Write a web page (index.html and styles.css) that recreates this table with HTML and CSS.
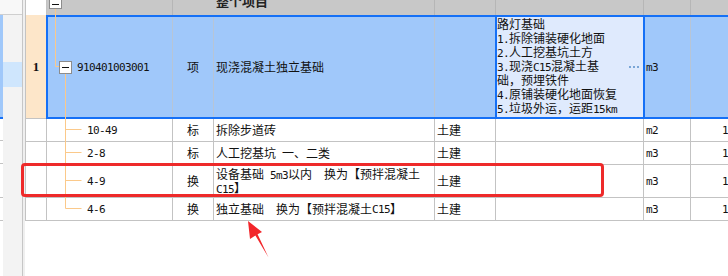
FILE: index.html
```html
<!DOCTYPE html>
<html lang="zh-CN">
<head>
<meta charset="utf-8">
<title>清单</title>
<link rel="stylesheet" href="styles.css">
</head>
<body>
<div class="page">
  <aside class="side">
    <div class="side-head"></div>
    <div class="side-body">
      <div class="side-col">
        <div class="sc-sel"></div>
        <div class="sc-row h22"></div>
        <div class="sc-row h23"></div>
        <div class="sc-row h34"></div>
        <div class="sc-row h23"></div>
      </div>
      <div class="side-panel"><div class="side-hl"></div></div>
    </div>
  </aside>
  <div class="gutter"></div>

  <div class="grid">
    <div class="row head">
      <div class="c w-rh rh-head"></div>
      <div class="c w-code"></div>
      <div class="c w-title"><span class="title">整个项目</span></div>
      <div class="c w-spec"></div>
      <div class="c w-desc"></div>
      <div class="c w-unit"></div>
      <div class="c w-qty"></div>
    </div>

    <div class="row row-sel">
      <div class="c rh-sel">1</div>
      <div class="sel">
        <div class="c w-code"><span class="tog"></span><span class="l">910401003001</span></div>
        <div class="c w-type">项</div>
        <div class="c w-name">现浇混凝土独立基础</div>
        <div class="c w-spec"></div>
        <div class="c w-desc">
          <div class="desc-text">路灯基础<br><span class="l">1.</span>拆除铺装硬化地面<br><span class="l">2.</span>人工挖基坑土方<br><span class="l">3.</span>现浇<span class="l">C15</span>混凝土基<br>础，预埋铁件<br><span class="l">4.</span>原铺装硬化地面恢复<br><span class="l">5.</span>垃圾外运，运距<span class="l">15km</span></div>
          <svg class="more" width="10" height="2" viewBox="0 0 10 2"><rect x="0" y="0" width="2" height="2"/><rect x="4" y="0" width="2" height="2"/><rect x="8" y="0" width="2" height="2"/></svg>
        </div>
        <div class="c w-unit"><span class="l">m3</span></div>
        <div class="c w-qty"></div>
      </div>
    </div>

    <div class="row r23">
      <div class="c w-rh"></div>
      <div class="c w-code child"><span class="l">10-49</span></div>
      <div class="c w-type">标</div>
      <div class="c w-name">拆除步道砖</div>
      <div class="c w-spec">土建</div>
      <div class="c w-desc"></div>
      <div class="c w-unit"><span class="l">m2</span></div>
      <div class="c w-qty"><span class="l">1</span></div>
    </div>

    <div class="row r23">
      <div class="c w-rh"></div>
      <div class="c w-code child"><span class="l">2-8</span></div>
      <div class="c w-type">标</div>
      <div class="c w-name">人工挖基坑<span class="l">&nbsp;</span>一、二类</div>
      <div class="c w-spec">土建</div>
      <div class="c w-desc"></div>
      <div class="c w-unit"><span class="l">m3</span></div>
      <div class="c w-qty"><span class="l">1</span></div>
    </div>

    <div class="row r33">
      <div class="c w-rh"></div>
      <div class="c w-code child"><span class="l">4-9</span></div>
      <div class="c w-type">换</div>
      <div class="c w-name"><div>设备基础<span class="l">&nbsp;5m3</span>以内<span class="l">&nbsp;&nbsp;</span>换为【预拌混凝土<br><span class="l">C15</span>】</div></div>
      <div class="c w-spec">土建</div>
      <div class="c w-desc"></div>
      <div class="c w-unit"><span class="l">m3</span></div>
      <div class="c w-qty"><span class="l">1</span></div>
    </div>

    <div class="row r23">
      <div class="c w-rh"></div>
      <div class="c w-code child"><span class="l">4-6</span></div>
      <div class="c w-type">换</div>
      <div class="c w-name">独立基础<span class="l">&nbsp;&nbsp;</span>换为【预拌混凝土<span class="l">C15</span>】</div>
      <div class="c w-spec">土建</div>
      <div class="c w-desc"></div>
      <div class="c w-unit"><span class="l">m3</span></div>
      <div class="c w-qty"><span class="l">1</span></div>
    </div>
  </div>

  <svg class="tree" width="728" height="276" viewBox="0 0 728 276">
    <g fill="none" stroke="#fbc98a" stroke-width="1">
      <path d="M55.5 9 V66.5 H59"/>
      <path d="M65.5 74 V208.5"/>
      <path d="M65.5 129.5 H81.5"/>
      <path d="M65.5 152.5 H81.5"/>
      <path d="M65.5 180.5 H81.5"/>
      <path d="M65.5 208.5 H81.5"/>
    </g>
    <rect x="49.5" y="-4.5" width="12" height="13" fill="#fff" stroke="#8c8c8c"/>
    <path d="M52 4.5 H59" stroke="#111" stroke-width="1"/>
  </svg>

  <div class="mark"></div>
  <svg class="arrow" width="728" height="276" viewBox="0 0 728 276">
    <polygon points="248,221 262,232 257.6,234.3 268.5,257.5 255.4,235.6 250,239" fill="#f2262a"/>
  </svg>
</div>
</body>
</html>
```

FILE: styles.css
```css
* { box-sizing: border-box; }
html, body { margin: 0; padding: 0; }
body {
  width: 728px;
  height: 276px;
  overflow: hidden;
  background: #fff;
  font-family: "Noto Sans CJK SC", sans-serif;
  font-size: 12px;
  line-height: 14px;
  color: #111;
}
.page {
  position: relative;
  display: flex;
  width: 728px;
  height: 276px;
  overflow: hidden;
}

/* left panel */
.side {
  width: 22px;
  flex: none;
  display: flex;
  flex-direction: column;
  background: #f3f3f3;
}
.side-head {
  height: 15px;
  background: #f8f8f8;
  border-bottom: 1px solid #cfcfcf;
}
.side-body { flex: 1; display: flex; }
.side-col { width: 3px; background: #fff; }
.sc-sel {
  height: 104px;
  background: #a0c8fa;
  border-bottom: 2px solid #1570f6;
}
.sc-row { border-bottom: 1px solid #c3c3c3; }
.h22 { height: 22px; }
.h23 { height: 23px; }
.h34 { height: 34px; }
.side-panel { flex: 1; }
.side-hl {
  margin-top: 47px;
  height: 25px;
  background: #cfe6fd;
}
.gutter {
  width: 3px;
  flex: none;
  background: #efefef;
  border-left: 1px solid #c6c6c6;
}

/* grid */
.grid {
  flex: none;
  width: 703px;
  align-self: flex-start;
  overflow: hidden;
  border-left: 1px solid #c3c3c3;
  display: flex;
  flex-direction: column;
}
.row { display: flex; flex: none; }
.c {
  flex: none;
  display: flex;
  align-items: center;
  white-space: nowrap;
  overflow: hidden;
  border-right: 1px solid #c3c3c3;
}
.l {
  font-family: "DejaVu Sans Mono", monospace;
  font-size: 11px;
  letter-spacing: -0.62px;
  line-height: 11px;
}
.w-rh { width: 21px; }
.w-code { width: 126px; }
.w-type { width: 41px; justify-content: center; }
.w-name { width: 221px; padding-left: 2px; }
.w-spec { width: 61px; padding-left: 2px; }
.w-desc { width: 148px; }
.w-unit { width: 47px; padding-left: 2px; }
.w-qty { width: 60px; padding-left: 31px; border-right: 0; }
.child { padding-left: 40px; }

.r23 { height: 23px; border-bottom: 1px solid #c3c3c3; }
.r33 { height: 33px; border-bottom: 1px solid #c3c3c3; }

/* header row */
.head { height: 15px; background: #c8c8c8; }
.head .c { border-right-color: #b6b6b6; align-items: flex-start; }
.head .rh-head { background: #fff; border-right-color: #c3c3c3; }
.w-title { width: 262px; padding-left: 43px; }
.title {
  font-size: 13px;
  font-weight: bold;
  line-height: 14px;
  margin-top: -6px;
  color: #222;
}

/* selected row */
.row-sel { height: 104px; }
.rh-sel {
  width: 20px;
  border-right: 0;
  border-bottom: 1px solid #c3c3c3;
  background: #fde6c9;
  justify-content: center;
  font-family: "Liberation Serif", serif;
  font-weight: bold;
  font-size: 13px;
}
.sel {
  flex: none;
  width: 690px;
  height: 104px;
  display: flex;
  background: #a0c8fa;
  border: 2px solid #1570f6;
  border-right: 0;
}
.sel .c { border-right-color: #b7c5d6; }
.sel .w-code { width: 125px; }
.sel .w-spec { width: 60px; border-right: 0; }
.sel .w-desc {
  width: 150px;
  align-items: stretch;
  background: #dfeafd;
  border-left: 2px solid #1570f6;
  border-right: 2px solid #1570f6;
}
.sel .w-unit { width: 46px; padding-left: 1px; }
.desc-text { flex: 1; line-height: 14px; }
.more { align-self: center; margin-right: 4px; fill: #7aa6d6; flex: none; }
.tog {
  position: relative;
  flex: none;
  width: 13px;
  height: 13px;
  margin-left: 11px;
  margin-right: 5px;
  background: #fff;
  border: 1px solid #8c8c8c;
}
.tog::after {
  content: "";
  position: absolute;
  left: 2px;
  top: 5px;
  width: 7px;
  height: 1px;
  background: #111;
}

/* overlays */
.tree, .arrow {
  position: absolute;
  left: 0;
  top: 0;
  pointer-events: none;
}
.mark {
  position: absolute;
  left: 21px;
  top: 163px;
  width: 583px;
  height: 34px;
  border: 3px solid #ee2a2a;
  border-radius: 4px;
  pointer-events: none;
}
```
